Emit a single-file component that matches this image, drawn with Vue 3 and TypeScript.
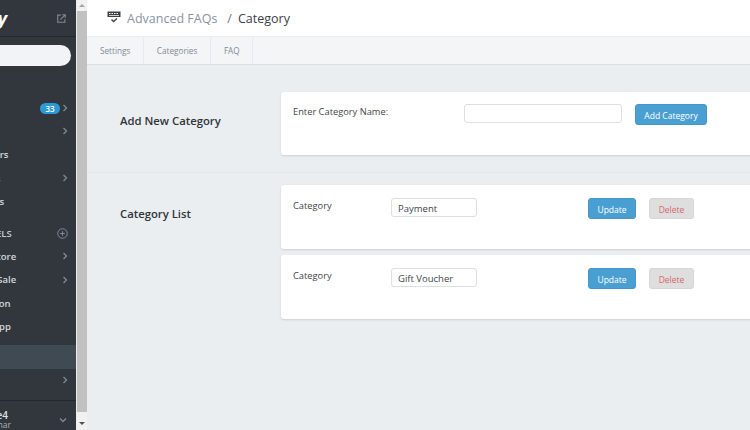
<template>
  <div class="page">
    <!-- sidebar, scrolled so that only its right part shows -->
    <aside class="sidebar">
      <div class="brand">
        <span class="logo">Shopify</span>
        <svg class="ext-icon" width="9" height="9" viewBox="0 0 12 12" fill="none" stroke="#7f8a94" stroke-width="1.5">
          <path d="M5 1.5H1v9.5h9.5V7" />
          <path d="M4.5 7.5 10.5 1.5M7 1h4v4" />
        </svg>
      </div>
      <div class="search"></div>
      <nav class="nav">
        <div
          v-for="item in navItems"
          :key="item.label"
          class="nav-item"
          :class="{ active: item.active, caps: item.caps }"
        >
          <span class="nav-label">{{ item.label }}</span>
          <span v-if="item.badge" class="badge">{{ item.badge }}</span>
          <svg v-if="item.plus" class="plus" width="11" height="11" viewBox="0 0 12 12" fill="none" stroke="#87919a">
            <circle cx="6" cy="6" r="5.2" />
            <path d="M6 3.5v5M3.5 6h5" />
          </svg>
          <svg v-if="item.arrow" class="chev" width="6" height="8" viewBox="0 0 6 8" fill="none" stroke="#7f8a94" stroke-width="1.3">
            <path d="M1.5 1 4.5 4 1.5 7" />
          </svg>
        </div>
      </nav>
      <div class="account">
        <div class="account-text">
          <span class="store">Storefront Theme4</span>
          <span class="owner">Rohit Kumar</span>
        </div>
        <svg width="8" height="6" viewBox="0 0 8 6" fill="none" stroke="#7f8a94" stroke-width="1.3">
          <path d="M1 1.5 4 4.5 7 1.5" />
        </svg>
      </div>
    </aside>

    <div class="scrollbar">
      <span class="arrow up"></span>
      <div class="thumb"></div>
      <span class="arrow down"></span>
    </div>

    <main class="main">
      <header class="topbar">
        <svg class="faq-icon" width="14" height="12" viewBox="0 0 14 12">
          <path d="M0.5 0.5h13v5.5h-13z" fill="#3a3f45" />
          <path d="M2 2h1.5v1H2zM4.5 2H6v1H4.5zM7 2h1.5v1H7zM9.5 2H11v1H9.5zM2 4h10v.8H2z" fill="#fff" />
          <path d="M4.5 8.5 6.5 10.5 10 7.5" fill="none" stroke="#3a3f45" stroke-width="1.3" />
        </svg>
        <span class="crumb">Advanced FAQs</span>
        <span class="sep">/</span>
        <span class="current">Category</span>
      </header>

      <div class="tabs">
        <a v-for="tab in tabs" :key="tab" class="tab">{{ tab }}</a>
      </div>

      <section class="section first">
        <h2 class="section-title">Add New Category</h2>
        <div class="card add-card">
          <label class="add-label">Enter Category Name:</label>
          <input class="field add-field" type="text" />
          <button class="btn primary add-btn">Add Category</button>
        </div>
      </section>

      <section class="section">
        <h2 class="section-title">Category List</h2>
        <div class="list">
          <div v-for="cat in categories" :key="cat" class="card row-card">
            <label class="row-label">Category</label>
            <input class="field row-field" type="text" :value="cat" />
            <button class="btn primary update-btn">Update</button>
            <button class="btn danger">Delete</button>
          </div>
        </div>
      </section>
    </main>
  </div>
</template>

<script setup lang="ts">
interface NavItem {
  label: string
  badge?: string
  arrow?: boolean
  plus?: boolean
  active?: boolean
  caps?: boolean
}

const navItems: NavItem[] = [
  { label: 'Home' },
  { label: 'Orders', badge: '33', arrow: true },
  { label: 'Products', arrow: true },
  { label: 'Customers' },
  { label: 'Analytics', arrow: true },
  { label: 'Discounts' },
  { label: 'SALES CHANNELS', plus: true, caps: true },
  { label: 'Online Store', arrow: true },
  { label: 'Point of Sale', arrow: true },
  { label: 'Buy Button' },
  { label: 'Mobile App' },
  { label: 'Apps', active: true },
  { label: 'Settings', arrow: true }
]

const tabs = ['Settings', 'Categories', 'FAQ']
const categories = ['Payment', 'Gift Voucher']
</script>

<style>
html,
body {
  margin: 0;
  overflow: hidden;
}
</style>

<style scoped>
.page {
  display: flex;
  width: 750px;
  height: 430px;
  overflow: hidden;
  font-family: "Open Sans", "Liberation Sans", sans-serif;
  background: #ebeef0;
}

.sidebar {
  flex: 0 0 207px;
  width: 207px;
  height: 430px;
  margin-left: -131px;
  display: flex;
  flex-direction: column;
  background: #31373d;
  color: #dfe3e8;
  box-sizing: border-box;
}

.brand {
  height: 36px;
  flex-shrink: 0;
  display: flex;
  align-items: center;
  justify-content: flex-end;
  padding-right: 10px;
  border-bottom: 1px solid #24282d;
  position: relative;
}

.logo {
  position: absolute;
  right: 69px;
  top: 6px;
  font-size: 18px;
  font-weight: 700;
  font-style: italic;
  color: #fff;
}

.search {
  flex-shrink: 0;
  height: 21px;
  margin: 8px 5px 0 0;
  background: #f2f3f5;
  border-radius: 11px;
}

.nav {
  flex: 1;
  padding-top: 7px;
  min-height: 0;
}

.nav-item {
  height: 23.4px;
  display: flex;
  align-items: center;
  padding: 0 8px 0 90px;
  font-size: 9.5px;
  font-weight: 600;
  color: #d3d8dd;
}

.nav-item.caps {
  margin: 8px 0 0;
  padding-left: 63px;
  color: #c4cdd5;
}

.nav-item.active {
  margin-top: 7px;
  background: #3f4a52;
}

.nav-label {
  flex: 1;
  white-space: nowrap;
}

.badge {
  width: 20px;
  height: 11px;
  margin-right: 2px;
  border-radius: 6px;
  background: #2d9ad8;
  color: #fff;
  font-size: 8px;
  line-height: 11px;
  text-align: center;
}

.account {
  flex-shrink: 0;
  height: 30px;
  display: flex;
  align-items: center;
  padding: 8px 9px 0 0;
  border-top: 1px solid #24282d;
  box-sizing: border-box;
}

.account-text {
  flex: 1;
  display: flex;
  flex-direction: column;
  align-items: flex-end;
  padding-right: 48px;
  white-space: nowrap;
}

.store {
  margin-right: 3px;
  font-size: 10px;
  line-height: 10px;
  font-weight: 600;
  color: #dfe3e8;
}

.owner {
  font-size: 8.5px;
  line-height: 9px;
  color: #a8b2bb;
}

.scrollbar {
  flex: 0 0 10px;
  height: 430px;
  display: flex;
  flex-direction: column;
  align-items: stretch;
  background: #f1f1f1;
  margin-left: 1px;
  box-sizing: border-box;
}

.thumb {
  flex: 1;
  background: #c1c1c1;
}

.arrow {
  position: relative;
}

.arrow.up {
  flex: 0 0 11px;
}

.arrow.down {
  flex: 0 0 18px;
}

.arrow::after {
  content: "";
  position: absolute;
  left: 2px;
  border-left: 3px solid transparent;
  border-right: 3px solid transparent;
}

.arrow.up::after {
  top: 4px;
  border-bottom: 3px solid #a3a3a3;
}

.arrow.down::after {
  top: 10px;
  border-top: 3px solid #505050;
}

.main {
  flex: 1;
  min-width: 0;
  display: flex;
  flex-direction: column;
}

.topbar {
  height: 36px;
  flex-shrink: 0;
  display: flex;
  align-items: center;
  padding-left: 20px;
  background: #fff;
  font-size: 12.5px;
  box-sizing: border-box;
}

.faq-icon {
  margin-right: 6px;
  margin-top: -3px;
}

.crumb {
  color: #8a94a3;
}

.sep {
  margin: 0 6px 0 10px;
  color: #6d7680;
}

.current {
  color: #3b4148;
}

.tabs {
  height: 29px;
  flex-shrink: 0;
  display: flex;
  background: #f4f5f7;
  border-top: 1px solid #eaedef;
  border-bottom: 1px solid #dadee1;
  box-sizing: border-box;
}

.tab {
  display: flex;
  align-items: center;
  padding: 0 12.5px 0 13px;
  font-size: 8.2px;
  color: #808a96;
  border-right: 1px solid #e8ebed;
}

.section {
  display: grid;
  grid-template-columns: 161px 1fr;
  margin-right: -10px;
  padding-left: 33px;
  padding-top: 12px;
}

.section.first {
  padding-top: 27px;
  padding-bottom: 17px;
  border-bottom: 1px solid #e3e6e9;
}

.section-title {
  margin: 0;
  padding-top: 21px;
  font-size: 11.3px;
  font-weight: 600;
  color: #2f353b;
}

.list {
  display: flex;
  flex-direction: column;
  gap: 6px;
}

.card {
  display: flex;
  align-items: flex-start;
  height: 64px;
  box-sizing: border-box;
  padding: 13px 12px;
  background: #fff;
  border-radius: 3px;
  box-shadow: 0 1px 2px rgba(60, 70, 80, 0.18);
}

.add-card {
  height: 63px;
  padding-top: 12px;
}

.add-label,
.row-label {
  margin-top: 2px;
  font-size: 9.3px;
  line-height: 12px;
  color: #3f454c;
}

.add-label {
  flex: 0 0 171px;
}

.row-label {
  flex: 0 0 98px;
}

.field {
  box-sizing: border-box;
  height: 19px;
  margin: 0;
  padding: 1px 6px 0;
  border: 1px solid #dcdfe3;
  border-radius: 3px;
  background: #fff;
  font: 9.5px "Open Sans", "Liberation Sans", sans-serif;
  color: #3f454c;
  outline: none;
}

.add-field {
  width: 158px;
  margin-right: 13px;
}

.row-field {
  width: 86px;
  margin-right: 111px;
}

.btn {
  box-sizing: border-box;
  height: 21px;
  margin: 0;
  padding: 1px 0 0;
  border: 1px solid transparent;
  border-radius: 3px;
  font: 8.5px "Open Sans", "Liberation Sans", sans-serif;
}

.primary {
  background: #4a9fd2;
  border-color: #4397cb;
  color: #fff;
}

.add-btn {
  width: 72px;
}

.update-btn {
  width: 48px;
  margin-right: 13px;
}

.danger {
  width: 45px;
  background: #dedede;
  border-color: #d6d6d6;
  color: #d9656b;
}
</style>
